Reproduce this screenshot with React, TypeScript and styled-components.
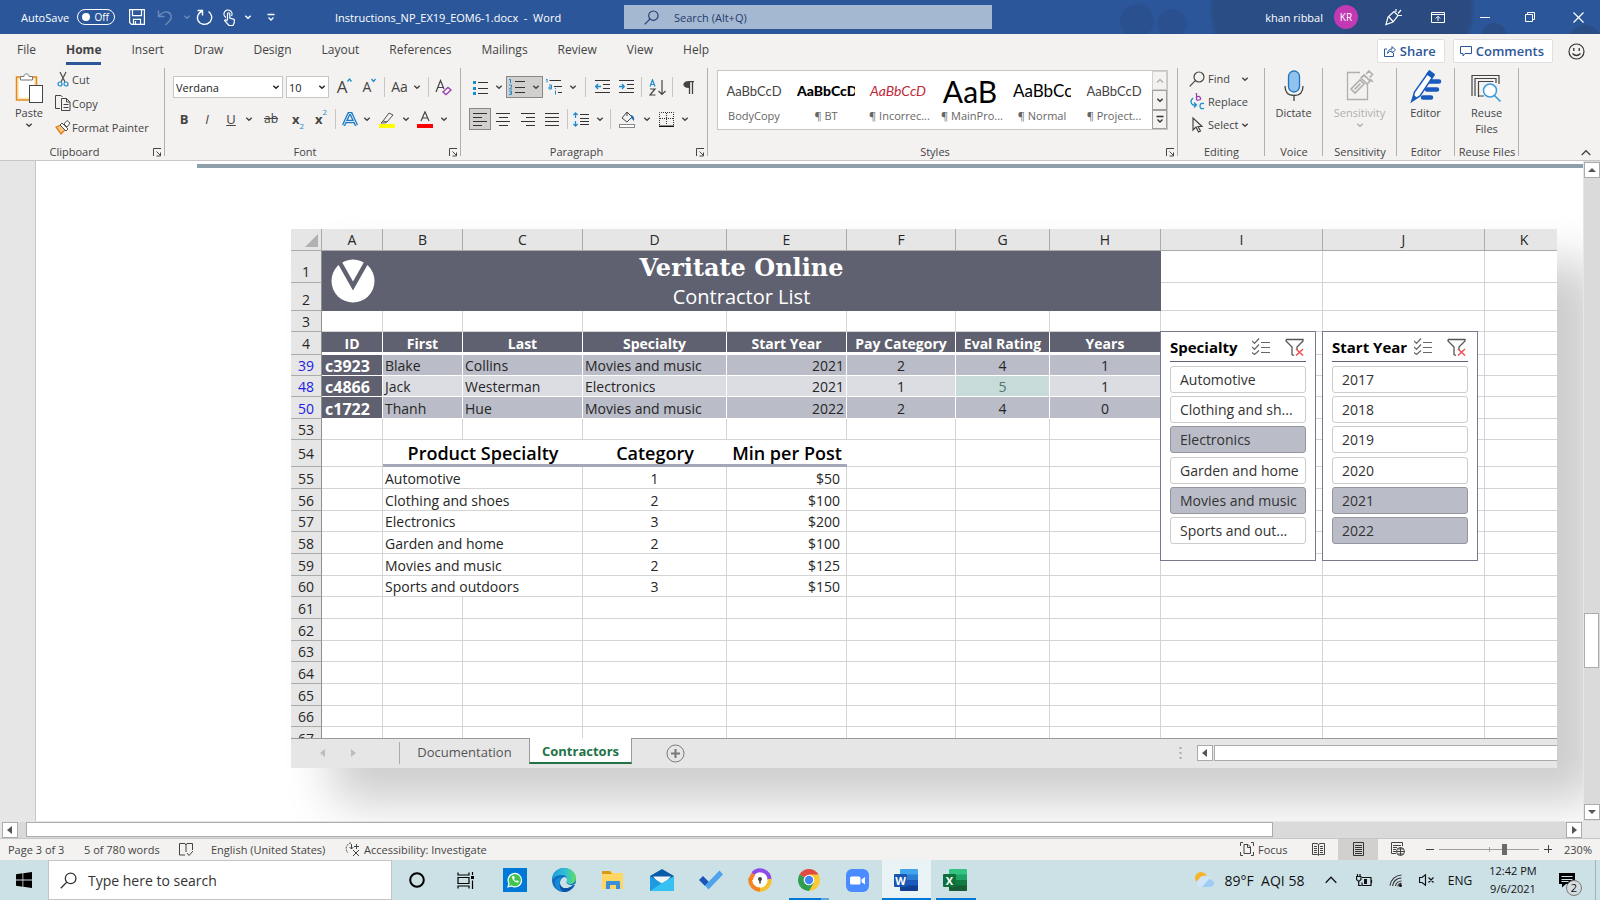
import React from 'react';
import styled, { createGlobalStyle, css } from 'styled-components';

const UI = '"Open Sans", "Noto Sans", sans-serif';
const BLUE = '#2b579a';
const INK = '#444';
const SLATE = '#5f6170';

const GlobalStyle = createGlobalStyle`
  *, *::before, *::after { box-sizing: border-box; }
  body { margin: 0; font-family: ${UI}; font-size: 11px; color: ${INK}; }
  button, input, select { font: inherit; color: inherit; margin: 0; }
  button { background: none; border: 0; padding: 0; }
`;

const Shell = styled.div`
  height: 100vh;
  display: flex;
  flex-direction: column;
  overflow: hidden;
  background: #e6e6e6;
`;

/* ---------- shared icon parts ---------- */

const Svg = styled.svg`
  display: block;
  flex: none;
  fill: none;
  stroke: currentColor;
  stroke-width: 1;
`;

type IconProps = { w: number; h: number; children: React.ReactNode };
const Icon = ({ w, h, children }: IconProps) => (
  <Svg width={w} height={h} viewBox={`0 0 ${w} ${h}`} aria-hidden="true">{children}</Svg>
);
const Chevron = ({ up = false }: { up?: boolean }) => (
  <Icon w={8} h={8}><path d={up ? 'M1 5.5 4 2.5 7 5.5' : 'M1.3 2.7 4 5.2 6.7 2.7'} strokeWidth="1.4" /></Icon>
);

/* ---------- title bar ---------- */

const TitleBar = styled.header`
  flex: none;
  height: 34px;
  display: flex;
  align-items: center;
  color: #fff;
  background:
    radial-gradient(circle at 1137px 21px, #2a5090 16px, transparent 18px),
    radial-gradient(circle at 1172px 24px, #2a5090 14px, transparent 16px),
    radial-gradient(circle at 1280px 10px, #2a4d85 66px, transparent 72px),
    radial-gradient(circle at 1400px 8px, #2a4a80 70px, transparent 76px),
    radial-gradient(circle at 1494px 36px, #2a4d85 12px, transparent 14px),
    radial-gradient(circle at 1585px 42px, #2a4d85 16px, transparent 18px),
    ${BLUE};
`;
const QuickAccess = styled.div`
  width: 335px;
  flex: none;
  padding-left: 21px;
  display: flex;
  align-items: center;
`;
const AutoSave = styled.label`
  display: flex;
  align-items: center;
  gap: 8px;
  margin-right: 12px;
`;
const Toggle = styled.span`
  position: relative;
  width: 38px;
  height: 16px;
  border: 1px solid #fff;
  border-radius: 8px;
  display: flex;
  align-items: center;
  justify-content: flex-end;
  padding-right: 5px;
  font-size: 10px;
  line-height: 14px;
`;
const ToggleInput = styled.input`
  appearance: none;
  position: absolute;
  left: 4px;
  top: 3px;
  width: 8px;
  height: 8px;
  border-radius: 50%;
  background: #fff;
`;
const TitleButton = styled.button<{ $w: number; $dim?: boolean }>`
  width: ${p => p.$w}px;
  height: 34px;
  display: flex;
  align-items: center;
  justify-content: center;
  opacity: ${p => (p.$dim ? 0.3 : 1)};
`;
const DocTitle = styled.h1`
  margin: 0;
  flex: none;
  width: 289px;
  font-size: 11px;
  font-weight: 400;
  white-space: pre;
`;
const TopSearch = styled.label`
  flex: 0 1 368px;
  height: 24px;
  display: flex;
  align-items: center;
  gap: 15px;
  padding-left: 20px;
  background: #a5b8d1;
  color: #1e3c6e;
`;
const BareInput = styled.input`
  flex: 1;
  min-width: 0;
  border: 0;
  outline: 0;
  padding: 0;
  background: transparent;
  &::placeholder { color: inherit; opacity: 1; }
`;
const Spacer = styled.div`flex: 1;`;
const UserName = styled.span`margin-right: 11px;`;
const Avatar = styled.span`
  width: 24px;
  height: 24px;
  border-radius: 50%;
  background: #c239b3;
  display: grid;
  place-items: center;
  font-size: 10px;
  margin-right: 18px;
`;

/* ---------- ribbon tabs ---------- */

const TabRow = styled.nav`
  flex: none;
  height: 34px;
  display: flex;
  align-items: center;
  padding: 0 15px 0 17px;
  background: #f3f2f1;
  font-size: 12px;
`;
const Tabs = styled.div`
  display: flex;
  gap: 30px;
`;
const Tab = styled.button<{ $active?: boolean }>`
  height: 27px;
  padding: 0;
  border-bottom: 3px solid ${p => (p.$active ? BLUE : 'transparent')};
  font-weight: ${p => (p.$active ? 700 : 400)};
`;
const CardButton = styled.button`
  height: 24px;
  display: flex;
  align-items: center;
  gap: 4px;
  padding: 0 8px 0 6px;
  margin-right: 8px;
  background: #fff;
  border: 1px solid #e1dfdd;
  border-radius: 2px;
  color: ${BLUE};
  font-size: 13px;
  font-weight: 600;
`;
const Smile = styled.button`margin-left: 7px; color: #333;`;

/* ---------- ribbon ---------- */

const Ribbon = styled.div`
  flex: none;
  height: 93px;
  display: flex;
  background: #f3f2f1;
  border-bottom: 1px solid #c8c6c4;
`;
const Group = styled.section<{ $w: number }>`
  width: ${p => p.$w}px;
  flex: none;
  background: linear-gradient(#b3b0ad, #b3b0ad) right top / 1px 88px no-repeat;
  display: flex;
  flex-direction: column;
`;
const GroupBody = styled.div<{ $pad?: number }>`
  flex: 1;
  padding-left: ${p => p.$pad ?? 0}px;
  display: flex;
`;
const GroupFoot = styled.footer<{ $launch?: boolean }>`
  height: 16px;
  display: grid;
  grid-template-columns: ${p => (p.$launch ? '1fr 16px' : '1fr')};
  align-items: center;
  justify-items: center;
  line-height: 16px;
  white-space: nowrap;
`;
const ToolLines = styled.div`
  display: flex;
  flex-direction: column;
  gap: 8px;
  padding-top: 7px;
`;
const ToolLine = styled.div`
  height: 24px;
  display: flex;
  align-items: center;
`;
const Tool = styled.button<{ $w: number; $on?: boolean; $gap?: number }>`
  width: ${p => p.$w}px;
  height: 22px;
  flex: none;
  display: flex;
  align-items: center;
  justify-content: center;
  gap: ${p => p.$gap ?? 7}px;
  ${p => p.$on && css`background: #d2d0ce; border: 1px solid #8a8886;`}
`;
const Divider = styled.span<{ $w?: number }>`
  width: ${p => p.$w ?? 8}px;
  height: 20px;
  flex: none;
  background: linear-gradient(#c8c6c4, #c8c6c4) center / 1px 100% no-repeat;
`;
const Combo = styled.label<{ $w: number }>`
  position: relative;
  width: ${p => p.$w}px;
  height: 22px;
  margin-right: 3px;
  display: flex;
  align-items: center;
  background: #fff;
  border: 1px solid #c8c6c4;
  color: #222;
  & > svg { position: absolute; right: 2px; pointer-events: none; }
`;
const Select = styled.select`
  appearance: none;
  width: 100%;
  border: 0;
  outline: 0;
  padding: 0 0 0 2px;
  background: transparent;
`;
const Glyph = styled.span<{ $bold?: boolean; $italic?: boolean; $size?: number; $line?: string }>`
  font-size: ${p => p.$size ?? 13}px;
  font-weight: ${p => (p.$bold ? 700 : 400)};
  font-style: ${p => (p.$italic ? 'italic' : 'normal')};
  text-decoration: ${p => p.$line ?? 'none'};
  line-height: 20px;
`;
const Script = styled.span<{ $low?: boolean }>`
  font-size: 8px;
  line-height: 8px;
  color: #1e8bcd;
  align-self: ${p => (p.$low ? 'flex-end' : 'flex-start')};
`;
const BigTool = styled.button<{ $w: number; $dim?: boolean }>`
  width: ${p => p.$w}px;
  padding-top: 2px;
  display: flex;
  flex-direction: column;
  align-items: center;
  justify-content: flex-start;
  line-height: 16px;
  color: ${p => (p.$dim ? '#b1afad' : INK)};
  & > svg:first-child { margin-bottom: 1px; }
`;
const Stack = styled.div<{ $row: number }>`
  display: grid;
  grid-auto-rows: ${p => p.$row}px;
  align-content: start;
`;
const TextTool = styled.button<{ $gap?: number }>`
  display: flex;
  align-items: center;
  gap: ${p => p.$gap ?? 4}px;
  padding-bottom: 2px;
  text-align: left;
  white-space: nowrap;
`;
const IconSlot = styled.span<{ $w: number }>`
  width: ${p => p.$w}px;
  display: flex;
  justify-content: center;
`;

const Gallery = styled.div`
  flex: 1;
  height: 60px;
  margin: 2px 10px 0 9px;
  display: flex;
  background: #fff;
  border: 1px solid #c8c6c4;
`;
const StyleItem = styled.button`
  width: 72px;
  height: 58px;
  padding: 0 7px 4px;
  flex: none;
  overflow: hidden;
  color: #666;
`;
const Sample = styled.span<{ $size: number; $color: string; $bold?: boolean; $italic?: boolean }>`
  display: block;
  height: 36px;
  overflow: hidden;
  font-family: Lato, sans-serif;
  font-size: ${p => p.$size}px;
  line-height: 38px;
  color: ${p => p.$color};
  font-weight: ${p => (p.$bold ? 900 : 400)};
  font-style: ${p => (p.$italic ? 'italic' : 'normal')};
  white-space: nowrap;
`;
const StyleName = styled.span`
  display: block;
  line-height: 16px;
  white-space: nowrap;
`;
const GalleryNav = styled.div`
  width: 15px;
  margin-left: auto;
  display: grid;
  grid-template-rows: repeat(3, 1fr);
`;
const NavButton = styled.button<{ $dim?: boolean }>`
  display: grid;
  place-content: center;
  background: #f3f2f1;
  border: 1px solid ${p => (p.$dim ? '#d2d0ce' : '#a19f9d')};
  color: ${p => (p.$dim ? '#b1afad' : '#333')};
`;
const RibbonEnd = styled.div`
  flex: 1;
  display: flex;
  justify-content: flex-end;
  align-items: flex-end;
  padding: 0 9px 3px 0;
`;

/* ---------- document ---------- */

const Workspace = styled.main`
  flex: 1;
  min-height: 0;
  display: flex;
  overflow: hidden;
`;
const Page = styled.article`
  flex: 1;
  min-width: 0;
  margin-left: 35px;
  background: #fff;
  border-left: 1px solid #c6c6c6;
  overflow: hidden;
`;
const PageRule = styled.div`
  height: 4px;
  margin: 3px 0 0 161px;
  background: #8e9fac;
`;
const Sheet = styled.section`
  position: relative;
  margin: 61px 26px 0 255px;
  background: #fff;
  box-shadow: 42px 34px 46px rgba(0, 0, 0, 0.2);
  font-size: 14px;
  color: #262626;
`;
const GridClip = styled.div`overflow: hidden; height: 509px;`;
const Grid = styled.table`
  width: 100%;
  table-layout: fixed;
  border-collapse: separate;
  border-spacing: 0;
  line-height: 16px;
`;
const Col = styled.col<{ $w?: number }>`width: ${p => (p.$w ? `${p.$w}px` : 'auto')};`;
const Row = styled.tr<{ $h: number }>`height: ${p => p.$h}px;`;
const ColHead = styled.th`
  padding: 0;
  font-weight: 400;
  background: #e6e6e6;
  border-right: 1px solid #ababab;
  border-bottom: 1px solid #ababab;
  &:last-child { border-right: 0; padding-left: 6px; }
`;
const RowHead = styled.th<{ $filtered?: boolean; $low?: boolean }>`
  padding: ${p => (p.$low ? '0 0 2px' : '2px 0 0')};
  font-weight: 400;
  color: ${p => (p.$filtered ? '#2020e8' : '#262626')};
  background: #e6e6e6;
  border-right: 1px solid #8f8f8f;
  border-bottom: 1px solid #ababab;
  vertical-align: ${p => (p.$low ? 'bottom' : 'middle')};
`;
const Cell = styled.td<{ $align?: string; $pad?: number }>`
  padding: 2px ${p => p.$pad ?? 2}px 0;
  text-align: ${p => p.$align ?? 'left'};
  white-space: nowrap;
  border-right: 1px solid #d4d4d4;
  border-bottom: 1px solid #d4d4d4;
  &:last-child { border-right: 0; }
`;
const BannerCell = styled.td`
  padding: 0;
  background: ${SLATE};
  color: #fff;
`;
const Banner = styled.div`
  display: grid;
  grid-template-columns: 62px 1fr 62px;
  align-items: center;
  justify-items: center;
`;
const BannerText = styled.div`text-align: center;`;
const BannerTitle = styled.div`
  font: 700 24px/32px "DejaVu Serif", serif;
`;
const BannerSub = styled.div`
  font-size: 20px;
  font-weight: 500;
  line-height: 26px;
`;
const HeadCell = styled.th`
  padding: 3px 0 0;
  background: ${SLATE};
  color: #fff;
  font-weight: 700;
  white-space: nowrap;
  border-right: 1px solid #fff;
  border-bottom: 3px solid #fff;
`;
const DataCell = styled.td<{ $alt?: boolean; $align?: string; $good?: boolean }>`
  padding: 2px 2px 0;
  text-align: ${p => p.$align ?? 'left'};
  white-space: nowrap;
  border-right: 1px solid #fff;
  border-bottom: 1px solid #fff;
  background: ${p => (p.$good ? '#c7dbd8' : p.$alt ? '#dcdde3' : '#babdc8')};
  color: ${p => (p.$good ? '#4d7773' : '#262626')};
`;
const IdCell = styled.th`
  padding: 2px 0 0 3px;
  text-align: left;
  font-size: 16px;
  background: ${SLATE};
  color: #fff;
  border-right: 1px solid #fff;
  border-bottom: 1px solid #fff;
`;
const SubHead = styled.th`
  padding: 2px 0 0;
  font-size: 18px;
  font-weight: 600;
  line-height: 20px;
  color: #000;
  white-space: nowrap;
  border-bottom: 3px solid #a4a7b5;
`;

const SheetTabs = styled.div`
  height: 30px;
  display: flex;
  align-items: flex-start;
  background: #e6e6e6;
  border-top: 1px solid #9a9a9a;
  font-size: 13px;
`;
const SheetNav = styled.div`
  width: 109px;
  height: 22px;
  margin-top: 3px;
  padding-left: 28px;
  display: flex;
  align-items: center;
  gap: 22px;
  border-right: 1px solid #ababab;
  color: #bdbdbd;
`;
const SheetTab = styled.button<{ $active?: boolean; $w: number }>`
  width: ${p => p.$w}px;
  height: 26px;
  margin-top: -1px;
  padding-top: 2px;
  color: #555;
  ${p => p.$active && css`
    background: #fff;
    color: #217346;
    font-weight: 700;
    border: solid #9a9a9a;
    border-width: 0 1px;
    border-bottom: 2px solid #217346;
  `}
`;
const AddSheet = styled.button`margin: 5px 0 0 34px; color: #777;`;
const SheetScroll = styled.div`
  width: 378px;
  margin-top: 6px;
  display: flex;
  align-items: center;
  color: #777;
`;
const SheetTrack = styled.div`
  flex: 1;
  height: 16px;
  margin-left: 1px;
  background: #fff;
  border: solid #ababab;
  border-width: 1px 0 1px 1px;
`;
const ArrowButton = styled.button`
  width: 16px;
  height: 16px;
  flex: none;
  display: grid;
  place-content: center;
  background: #fff;
  border: 1px solid #ababab;
  color: #555;
`;
const DotsSlot = styled.span`margin-right: 15px;`;

/* slicers float over the grid */
const Slicers = styled.div`
  position: absolute;
  left: 869px;
  top: 102px;
  display: flex;
  gap: 6px;
`;
const Slicer = styled.section`
  width: 156px;
  height: 230px;
  padding: 0 9px 16px;
  background: #fff;
  border: 1px solid #77798c;
  display: flex;
  flex-direction: column;
`;
const SlicerHead = styled.header`
  height: 30px;
  margin-bottom: 4px;
  border-bottom: 1px solid ${SLATE};
  display: flex;
  align-items: center;
  font-weight: 700;
  font-size: 15px;
  color: #000;
  white-space: nowrap;
`;
const SlicerIcons = styled.span`
  margin-left: auto;
  padding-right: 2px;
  display: flex;
  gap: 15px;
`;
const SlicerList = styled.div`
  flex: 1;
  display: flex;
  flex-direction: column;
  justify-content: space-between;
`;
const SlicerButton = styled.button<{ $on?: boolean }>`
  height: 27px;
  padding: 0 0 0 9px;
  text-align: left;
  white-space: nowrap;
  color: #333;
  background: ${p => (p.$on ? '#babdc8' : '#fff')};
  border: 1px solid ${p => (p.$on ? '#94969f' : '#ccc')};
  border-radius: 3px;
`;

/* ---------- scroll bars ---------- */

const VScroll = styled.div`
  width: 17px;
  flex: none;
  display: flex;
  flex-direction: column;
  align-items: center;
  padding: 1px 1px 1px 0;
  background: #dadada;
  border-left: 1px solid #e6e6e6;
`;
const VThumb = styled.div`
  width: 15px;
  height: 55px;
  background: #fff;
  border: 1px solid #ababab;
`;
const Grow = styled.div<{ $by: number }>`flex: ${p => p.$by};`;
const HScroll = styled.div`
  flex: none;
  height: 17px;
  display: flex;
  align-items: center;
  padding: 0 18px 0 2px;
  background: #e6e6e6;
`;
const HTrack = styled.div`
  flex: 1;
  height: 16px;
  padding-left: 8px;
  background: #dadada;
`;
const HThumb = styled.div`
  width: 81%;
  height: 15px;
  background: #fff;
  border: 1px solid #ababab;
`;

/* ---------- status bar ---------- */

const StatusBar = styled.footer`
  flex: none;
  height: 22px;
  padding: 0 0 1px 8px;
  display: flex;
  align-items: center;
  background: #f3f2f1;
  border-top: 1px solid #c8c6c4;
`;
const StatusItem = styled.span<{ $w: number }>`
  width: ${p => p.$w}px;
  display: flex;
  align-items: center;
  gap: 4px;
  white-space: nowrap;
`;
const ViewButton = styled.button<{ $on?: boolean }>`
  width: 40px;
  height: 21px;
  display: grid;
  place-content: center;
  background: ${p => (p.$on ? '#d2d0ce' : 'transparent')};
`;
const ZoomGroup = styled.div`
  display: flex;
  align-items: center;
  margin-left: 4px;
`;
const ZoomButton = styled.button`
  width: 16px;
  display: grid;
  place-content: center;
`;
const ZoomRange = styled.input`
  appearance: none;
  width: 100px;
  height: 14px;
  margin: 0 1px;
  background: linear-gradient(#a19f9d, #a19f9d) center / 100% 1px no-repeat,
    linear-gradient(#a19f9d, #a19f9d) center / 1px 5px no-repeat;
  &::-webkit-slider-thumb {
    appearance: none;
    width: 5px;
    height: 11px;
    background: #6a6a6a;
  }
`;
const ZoomValue = styled.span`
  width: 44px;
  padding-right: 8px;
  text-align: right;
`;

/* ---------- task bar ---------- */

const TaskBar = styled.footer`
  flex: none;
  height: 40px;
  display: flex;
  align-items: stretch;
  background: #cce1e6;
  color: #111;
`;
const StartButton = styled.button`
  width: 48px;
  display: grid;
  place-content: center;
`;
const TaskSearch = styled.label`
  width: 344px;
  display: flex;
  align-items: center;
  gap: 11px;
  padding: 0 10px 0 11px;
  background: #fff;
  border: 1px solid #c4c4c4;
  font-size: 14px;
  color: #333;
`;
const TaskButton = styled.button<{ $state?: 'open' | 'active' | 'stack' }>`
  width: 49px;
  display: grid;
  place-content: center;
  ${p => p.$state === 'active' && css`
    background: linear-gradient(#0078d7, #0078d7) bottom / 100% 2px no-repeat, #e9f2f4;
  `}
  ${p => p.$state === 'open' && css`
    background: linear-gradient(#0078d7, #0078d7) bottom / 40px 2px no-repeat;
  `}
  ${p => p.$state === 'stack' && css`
    background: linear-gradient(90deg, #0078d7 80%, #62a8e0 80%) bottom / 40px 2px no-repeat;
  `}
`;
const TrayItem = styled.button<{ $w: number }>`
  width: ${p => p.$w}px;
  display: flex;
  align-items: center;
  justify-content: center;
  gap: 9px;
  white-space: pre;
`;
const Weather = styled(TrayItem)`
  font-size: 14px;
  padding-right: 6px;
`;
const Language = styled(TrayItem)`font-size: 12px;`;
const Clock = styled.time`
  width: 62px;
  padding-top: 2px;
  text-align: center;
  line-height: 18px;
`;
const Notice = styled.button`
  position: relative;
  width: 52px;
  padding-left: 15px;
  display: flex;
  align-items: center;
  border-right: 1px solid #9db4ba;
  margin-right: 4px;
`;
const Badge = styled.span`
  position: absolute;
  left: 22px;
  top: 20px;
  width: 16px;
  height: 16px;
  display: grid;
  place-items: center;
  border: 1px solid #777;
  border-radius: 50%;
  background: #d4dcde;
  font-size: 11px;
  line-height: 14px;
`;

/* ---------- icon drawings ---------- */

const Search = ({ s = 15 }: { s?: number }) => (
  <Svg width={s} height={s} viewBox="0 0 16 16" aria-hidden="true">
    <circle cx="10" cy="6" r="5" strokeWidth="1.2" /><path d="M6.3 9.7 .7 15.3" strokeWidth="1.2" />
  </Svg>
);
const Launcher = () => (
  <Icon w={9} h={9}><path d="M.5 8V.5H8M3.5 3.5l4 4M7.5 4.5v3.5h-4" /></Icon>
);
const Lines = ({ rows }: { rows: [number, number][] }) => (
  <Icon w={15} h={15}>
    {rows.map(([a, b], i) => <path key={i} d={`M${a} ${1.5 + i * 4}H${b}`} stroke="#333" />)}
  </Icon>
);
const ArrowGlyph = ({ dir }: { dir: 'l' | 'r' | 'u' | 'd' }) => {
  const d = { l: 'M6 0v8L1 4z', r: 'M2 0v8l5-4z', u: 'M0 6h8L4 2z', d: 'M0 2h8L4 6z' }[dir];
  return <Icon w={8} h={8}><path d={d} fill="currentColor" stroke="none" /></Icon>;
};
const Undo = () => (
  <Icon w={16} h={17}><path d="M1.5 1.500v6h6M1.8 7.2C5 3.5 8 2.5 10.5 3c4 1 5 6 2 9L8.5 16" strokeWidth="1.4" /></Icon>
);
const MoreBar = () => (
  <Icon w={8} h={9}><path d="M.5 1.5h7M1.5 4.5 4 7l2.5-2.5" strokeWidth="1.3" /></Icon>
);
const Checks = () => (
  <Icon w={18} h={17}>
    <path d="M0 3l2.5 2.5L7 .5M0 9l2.5 2.5L7 6.5M0 14.5l2.5 2L7 12.5M9 4.5h9M9 9.5h9M9 14.5h9" stroke="#666" strokeWidth="1.2" />
  </Icon>
);
const ClearFilter = () => (
  <Icon w={19} h={18}>
    <path d="M1 1.5h17v1.5l-6 6V12M1 1.5V3l6 6v7.5l2 1" stroke="#555" strokeWidth="1.3" />
    <path d="M11 11l7 6.5M18 11l-7 6.5" stroke="#e8535b" strokeWidth="1.5" />
  </Icon>
);
const OfficeTile = ({ letter, c }: { letter: 'W' | 'X'; c: string[] }) => (
  <Icon w={25} h={22}>
    <g stroke="none">
      <rect x="6" y="0" width="18" height="22" rx="1" fill={c[0]} />
      <rect x="6" y="5.5" width="18" height="6" fill={c[1]} />
      <rect x="6" y="11" width="18" height="6" fill={c[2]} />
      <path d="M6 16.5h18V21q0 1-1 1H7q-1 0-1-1z" fill={c[3]} />
      <rect x="0" y="5" width="13" height="13" rx="1" fill={c[4]} />
      <text x="6.5" y="15.5" fill="#fff" fontSize="11" fontWeight="700" textAnchor="middle" fontFamily="Open Sans">{letter}</text>
    </g>
  </Icon>
);

/* ---------- data ---------- */

const TABS = ['File', 'Home', 'Insert', 'Draw', 'Design', 'Layout', 'References', 'Mailings', 'Review', 'View', 'Help'];

const STYLES = [
  { s: 'AaBbCcD', n: 'BodyCopy', size: 13, color: '#444' },
  { s: 'AaBbCcD', n: '¶ BT', size: 14, color: '#000', bold: true },
  { s: 'AaBbCcD', n: '¶ Incorrec...', size: 14, color: '#c0273d', italic: true },
  { s: 'AaB', n: '¶ MainPro...', size: 30, color: '#000' },
  { s: 'AaBbCc', n: '¶ Normal', size: 17, color: '#000' },
  { s: 'AaBbCcD', n: '¶ Project...', size: 13, color: '#444' },
];

const COLS: [string, number?][] = [
  ['A', 61], ['B', 80], ['C', 120], ['D', 144], ['E', 120], ['F', 109], ['G', 94], ['H', 111], ['I', 162], ['J', 162], ['K'],
];
const HEADS = ['ID', 'First', 'Last', 'Specialty', 'Start Year', 'Pay Category', 'Eval Rating', 'Years'];
const PEOPLE = [
  { row: 39, h: 21, v: ['c3923', 'Blake', 'Collins', 'Movies and music', '2021', '2', '4', '1'] },
  { row: 48, h: 21, v: ['c4866', 'Jack', 'Westerman', 'Electronics', '2021', '1', '5', '1'] },
  { row: 50, h: 22, v: ['c1722', 'Thanh', 'Hue', 'Movies and music', '2022', '2', '4', '0'] },
];
const PRICES = [
  ['Automotive', '1', '$50'], ['Clothing and shoes', '2', '$100'], ['Electronics', '3', '$200'],
  ['Garden and home', '2', '$100'], ['Movies and music', '2', '$125'], ['Sports and outdoors', '3', '$150'],
];
const SLICERS = [
  { title: 'Specialty', items: ['Automotive', 'Clothing and sh...', 'Electronics', 'Garden and home', 'Movies and music', 'Sports and out...'], on: [2, 4] },
  { title: 'Start Year', items: ['2017', '2018', '2019', '2020', '2021', '2022'], on: [4, 5] },
];
/* body rows repeat a 22 / 22 / 21 rhythm */
const rowHeight = (i: number) => (i % 3 === 2 ? 21 : 22);
const blanks = (n: number) => Array.from({ length: n }, (_, i) => <Cell key={i} />);

const Foot = ({ label, launch }: { label: string; launch?: boolean }) => (
  <GroupFoot $launch={launch}><span>{label}</span>{launch && <button aria-label={`${label} settings`}><Launcher /></button>}</GroupFoot>
);
const Drop = ({ w }: { w: number }) => <Tool $w={w} aria-label="More"><Chevron /></Tool>;

function RibbonBar() {
  return (
    <Ribbon>
      <Group $w={165}>
        <GroupBody $pad={2}>
          <BigTool $w={54}>
            <Icon w={28} h={34}>
              <rect x="1.5" y="7" width="20" height="23" fill="#fde7b8" stroke="#e08a1e" strokeWidth="1.5" />
              <rect x="4" y="9.5" width="15" height="18" fill="#fff" stroke="none" />
              <path d="M5.5 10V6.5h3.5C9 3 14 3 14 6.5h3.5V10z" fill="#fff" stroke="#777" />
              <rect x="14.5" y="15.5" width="13" height="17" fill="#fff" stroke="#444" />
            </Icon>
            Paste
            <Chevron />
          </BigTool>
          <Stack $row={24}>
            <TextTool $gap={3}>
              <IconSlot $w={13}>
                <Icon w={12} h={16}>
                  <path d="M3 1l5 10M9 1L4 11" stroke="#555" strokeWidth="1.3" />
                  <circle cx="3" cy="13" r="2" stroke="#1e8bcd" strokeWidth="1.2" /><circle cx="9" cy="13" r="2" stroke="#1e8bcd" strokeWidth="1.2" />
                </Icon>
              </IconSlot>
              Cut
            </TextTool>
            <TextTool $gap={3}>
              <IconSlot $w={13}>
                <Icon w={16} h={16}>
                  <path d="M5 13.5H.5V.5H6l1.5 1.5M6.500 3.5h5l3.5 3.5v8.5h-8.5zM11.5 3.5V7H15M8.5 9.5h5M8.5 12.5h5" stroke="#444" />
                </Icon>
              </IconSlot>
              Copy
            </TextTool>
            <TextTool $gap={3}>
              <IconSlot $w={13}>
                <Icon w={16} h={15}>
                  <path d="M1 7l5-2 4 5-4 4z" fill="#f7c67c" stroke="#e07b1e" strokeWidth="1.3" />
                  <path d="M5 5l2-2 6 6-2 2zM9 4l3-3.5 3 2.5-3 4z" fill="#fff" stroke="#555" />
                </Icon>
              </IconSlot>
              Format Painter
            </TextTool>
          </Stack>
        </GroupBody>
        <Foot label="Clipboard" launch />
      </Group>

      <Group $w={296}>
        <GroupBody $pad={8}>
          <ToolLines>
            <ToolLine>
              <Combo $w={110}><Select aria-label="Font"><option>Verdana</option></Select><Chevron /></Combo>
              <Combo $w={43}><Select aria-label="Font size"><option>10</option></Select><Chevron /></Combo>
              <Tool $w={25} $gap={0} aria-label="Grow font"><Glyph $size={17}>A</Glyph><Script><Icon w={5} h={8}><path d="M.5 5.5 2.5 3 4.5 5.5" strokeWidth="1.3" /></Icon></Script></Tool>
              <Tool $w={25} $gap={0} aria-label="Shrink font"><Glyph $size={14}>A</Glyph><Script><Icon w={5} h={8}><path d="M.5 3 2.5 5.500 4.5 3" strokeWidth="1.3" /></Icon></Script></Tool>
              <Divider $w={4} />
              <Tool $w={40} $gap={5} aria-label="Change case"><Glyph $size={14}>Aa</Glyph><Chevron /></Tool>
              <Divider $w={4} />
              <Tool $w={26} aria-label="Clear formatting">
                <Icon w={17} h={17}>
                  <path d="M1 13L5.5 1.5 9 10M3 8.5h5" stroke="#444" strokeWidth="1.2" />
                  <path d="M8 13l5-4.5 3 2.5-5 4.5z" fill="#fff" stroke="#9b3fb0" strokeWidth="1.4" />
                </Icon>
              </Tool>
            </ToolLine>
            <ToolLine>
              <Tool $w={22}><Glyph $bold>B</Glyph></Tool>
              <Tool $w={24}><Glyph $italic>I</Glyph></Tool>
              <Tool $w={24}><Glyph $line="underline">U</Glyph></Tool>
              <Drop w={12} />
              <Tool $w={32}><Glyph $size={12} $line="line-through">ab</Glyph></Tool>
              <Tool $w={22} $gap={0}><Glyph $bold>x</Glyph><Script $low>2</Script></Tool>
              <Tool $w={24} $gap={0}><Glyph $bold>x</Glyph><Script>2</Script></Tool>
              <Divider $w={4} />
              <Tool $w={25} aria-label="Text effects">
                <Icon w={16} h={15}><path d="M1.5 13.5L7 1.5h2l5.5 12M4 9.5h8" stroke="#1e7ac2" strokeWidth="3.4" /><path d="M1.5 13.5L7 1.5h2l5.5 12M4 9.5h8" stroke="#cfe6f7" /></Icon>
              </Tool>
              <Drop w={10} />
              <Tool $w={30} aria-label="Highlight">
                <Icon w={16} h={17}><path d="M4 10l6-8 4 2-6 7zM4 10l-2 2h4l2-1" stroke="#555" /><rect y="13" width="16" height="4" fill="#ff0" stroke="none" /></Icon>
              </Tool>
              <Drop w={8} />
              <Tool $w={30} aria-label="Font colour">
                <Icon w={16} h={17}><path d="M4 10L8 .8 12 10M5.5 7h5" stroke="#444" strokeWidth="1.2" /><rect y="13" width="16" height="4" fill="#f00" stroke="none" /></Icon>
              </Tool>
              <Drop w={8} />
            </ToolLine>
          </ToolLines>
        </GroupBody>
        <Foot label="Font" launch />
      </Group>

      <Group $w={247}>
        <GroupBody $pad={8}>
          <ToolLines>
            <ToolLine>
              <Tool $w={37} aria-label="Bullets">
                <Icon w={15} h={15}><path d="M5 2.5h10M5 8.5h10M5 13.5h10" stroke="#333" /><path d="M0 1h3v3H0zM0 7h3v3H0zM0 12h3v3H0z" fill="#1e8bcd" stroke="none" /></Icon>
                <Chevron />
              </Tool>
              <Tool $w={37} $on aria-label="Numbering">
                <Icon w={16} h={16}><path d="M6 2.5h10M6 8.5h10M6 13.5h10" stroke="#333" /><path d="M0 1l1.500-1v4M.2 6h2.3v2L.5 10h2.5M0 12h2.5v3.5H0M1 13.7h1.5" stroke="#1e8bcd" /></Icon>
                <Chevron />
              </Tool>
              <Tool $w={37} aria-label="Multilevel list">
                <Icon w={16} h={16}><path d="M3.5 1.5H15M8 7.5h8M12 13.5h4" stroke="#333" /><path d="M0 1l1-1v3.5M3 6h2.5v4H3V8h2.5M9.5 11.5v4M9.5 9v1" stroke="#1e8bcd" /></Icon>
                <Chevron />
              </Tool>
              <Divider $w={10} />
              <Tool $w={24} aria-label="Decrease indent">
                <Icon w={15} h={14}><path d="M0 .5h15M8 4.5h7M8 8.5h7M0 12.5h15" stroke="#333" /><path d="M6 6.5H.8M3 4L.8 6.5 3 9" stroke="#1e8bcd" strokeWidth="1.4" /></Icon>
              </Tool>
              <Tool $w={24} aria-label="Increase indent">
                <Icon w={15} h={14}><path d="M0 .5h15M8 4.5h7M8 8.5h7M0 12.5h15" stroke="#333" /><path d="M0 6.5h5.2M3 4l2.2 2.5L3 9" stroke="#1e8bcd" strokeWidth="1.4" /></Icon>
              </Tool>
              <Divider $w={6} />
              <Tool $w={26} aria-label="Sort">
                <Icon w={17} h={17}><path d="M1 7.5L3.5 .8 6 7.5M2 5.5h3.5" stroke="#1e8bcd" strokeWidth="1.2" /><path d="M1 10h5l-5 6h5.5M13 1v14.5M9.5 12l3.5 3.5 3.5-3.5" stroke="#444" strokeWidth="1.2" /></Icon>
              </Tool>
              <Divider $w={5} />
              <Tool $w={26} aria-label="Show marks">
                <Icon w={11} h={13}><path d="M6 .5h5M6.5 .5V13M9.5 .5V13" strokeWidth="1.3" /><path d="M6 0v7C-1.500 7-1.500 0 6 0z" fill="#444" stroke="none" /></Icon>
              </Tool>
            </ToolLine>
            <ToolLine>
              <Tool $w={22} $on aria-label="Align left"><Lines rows={[[0, 14], [0, 9], [0, 14], [0, 9]]} /></Tool>
              <Tool $w={25} aria-label="Center"><Lines rows={[[0, 14], [3, 12], [0, 14], [3, 12]]} /></Tool>
              <Tool $w={24} aria-label="Align right"><Lines rows={[[0, 14], [5, 14], [0, 14], [5, 14]]} /></Tool>
              <Tool $w={24} aria-label="Justify"><Lines rows={[[0, 14], [0, 14], [0, 14], [0, 14]]} /></Tool>
              <Divider $w={6} />
              <Tool $w={36} aria-label="Line spacing">
                <Icon w={16} h={15}><path d="M7 2.5h9M7 6.5h9M7 9.5h9M7 12.5h9" stroke="#333" /><path d="M2.5 1v5M2.5 9v5M.3 3L2.5 1l2.2 2M.3 12l2.2 2 2.2-2" stroke="#1e8bcd" strokeWidth="1.3" /></Icon>
                <Chevron />
              </Tool>
              <Divider $w={8} />
              <Tool $w={42} aria-label="Shading">
                <Icon w={17} h={17}><path d="M3 7l5-6 5 5-5 5zM8 1v4" stroke="#444" /><path d="M12 4q4 1 3 6l-3-3z" fill="#1e6fb8" stroke="none" /><rect x=".5" y="13.5" width="15" height="3" fill="#fff" stroke="#888" /></Icon>
                <Chevron />
              </Tool>
              <Tool $w={36} aria-label="Borders">
                <Icon w={15} h={15}><path d="M.5 13V.5h14V13M7.5 1v12M1 6.5h13" stroke="#333" strokeDasharray="1 1" /><path d="M0 14.3h15" stroke="#111" strokeWidth="1.5" /></Icon>
                <Chevron />
              </Tool>
            </ToolLine>
          </ToolLines>
        </GroupBody>
        <Foot label="Paragraph" launch />
      </Group>

      <Group $w={470}>
        <GroupBody>
          <Gallery>
            {STYLES.map(s => (
              <StyleItem key={s.n}>
                <Sample $size={s.size} $color={s.color} $bold={s.bold} $italic={s.italic}>{s.s}</Sample>
                <StyleName>{s.n}</StyleName>
              </StyleItem>
            ))}
            <GalleryNav>
              <NavButton $dim aria-label="Up"><Chevron up /></NavButton>
              <NavButton aria-label="Down"><Chevron /></NavButton>
              <NavButton aria-label="All styles"><MoreBar /></NavButton>
            </GalleryNav>
          </Gallery>
        </GroupBody>
        <Foot label="Styles" launch />
      </Group>

      <Group $w={87}>
        <GroupBody $pad={11}>
          <Stack $row={23}>
            <TextTool $gap={3}><IconSlot $w={16}><Search s={16} /></IconSlot>Find<IconSlot $w={24}><Chevron /></IconSlot></TextTool>
            <TextTool $gap={3}>
              <IconSlot $w={16}>
                <Icon w={15} h={17}>
                  <path d="M6.5 0v7M6.5 4q3-1.500 4 1t-4 2" stroke="#9b3fb0" strokeWidth="1.3" />
                  <path d="M14 10.5q-4-1-4 2.5t4 2.5M3 5q-4 4 0 7h3M4 9.5l2.5 2.5L4 14.5" stroke="#1e8bcd" strokeWidth="1.3" />
                </Icon>
              </IconSlot>
              Replace
            </TextTool>
            <TextTool $gap={3}><IconSlot $w={16}><Icon w={11} h={16}><path d="M1 1v12l3-3 2.5 5 2-1L6 9.5h4z" stroke="#444" strokeWidth="1.2" /></Icon></IconSlot>Select<Chevron /></TextTool>
          </Stack>
        </GroupBody>
        <Foot label="Editing" />
      </Group>

      <Group $w={58}>
        <GroupBody>
          <BigTool $w={57}>
            <Icon w={20} h={34}>
              <rect x="4.5" y="1" width="11" height="21" rx="5.5" fill="#8fc3ee" stroke="#2372b9" strokeWidth="1.3" />
              <path d="M1 16q0 9.5 9 9.5t9-9.5M10 25.5V31" stroke="#444" strokeWidth="1.3" />
            </Icon>
            Dictate
          </BigTool>
        </GroupBody>
        <Foot label="Voice" />
      </Group>
      <Group $w={74}>
        <GroupBody>
          <BigTool $w={73} $dim>
            <Icon w={28} h={34}>
              <path d="M14 2.5H1.5v27h20V14" strokeWidth="1.3" />
              <path d="M5 19l9-9 4 4-9 9zM8.5 19.5l6-6M15 8l6 6 3-3-6-6zM20 4l3-3 3.5 3.5-3 3M24 9l3 3" strokeWidth="1.6" />
            </Icon>
            Sensitivity
            <Chevron />
          </BigTool>
        </GroupBody>
        <Foot label="Sensitivity" />
      </Group>
      <Group $w={58}>
        <GroupBody>
          <BigTool $w={57}>
            <Icon w={32} h={34}>
              <g stroke="#185abd">
                <path d="M19 11.5h10M17 19.500h10M13 27.5h8" strokeWidth="4.5" strokeLinecap="round" />
                <path d="M2 31l2.5-9L19 1.500l5 3.5L10 26z" fill="#fff" strokeWidth="1.5" />
                <path d="M17 4l5 3.5 2-3L19.500 1zM2 31l2-5 2 2z" fill="#185abd" strokeWidth="1.5" />
              </g>
            </Icon>
            Editor
          </BigTool>
        </GroupBody>
        <Foot label="Editor" />
      </Group>
      <Group $w={64}>
        <GroupBody>
          <BigTool $w={63}>
            <Icon w={31} h={34}>
              <path d="M1 26V5.5h27V14M4 26V8.5h21V13M7.5 27V11.5h15M7 26h6" stroke="#444" strokeWidth="1.2" />
              <circle cx="19" cy="20.5" r="6.5" fill="#fff" stroke="#3a9bdc" strokeWidth="1.5" /><path d="M23.5 25.5l6 6" stroke="#3a9bdc" strokeWidth="1.6" />
            </Icon>
            <span>Reuse<br />Files</span>
          </BigTool>
        </GroupBody>
        <Foot label="Reuse Files" />
      </Group>
      <RibbonEnd><button aria-label="Collapse ribbon"><Icon w={10} h={8}><path d="M.7 6 5 1.7 9.3 6" strokeWidth="1.3" /></Icon></button></RibbonEnd>
    </Ribbon>
  );
}

function Spreadsheet() {
  return (
    <Sheet>
      <GridClip>
        <Grid>
          <colgroup><Col $w={31} />{COLS.map(([c, w]) => <Col key={c} $w={w} />)}</colgroup>
          <tbody>
            <Row $h={22}>
              <ColHead><Icon w={30} h={20}><path d="M27 4v13H14z" fill="#b1b1b1" stroke="none" /></Icon></ColHead>
              {COLS.map(([c]) => <ColHead key={c}>{c}</ColHead>)}
            </Row>
            <Row $h={32}>
              <RowHead $low>1</RowHead>
              <BannerCell colSpan={8} rowSpan={2}>
                <Banner>
                  <Icon w={44} h={44}>
                    <circle cx="22" cy="22" r="21.5" fill="#fff" stroke="none" />
                    <path d="M9 4l13 23L35 4" stroke={SLATE} strokeWidth="4.5" />
                  </Icon>
                  <BannerText><BannerTitle>Veritate Online</BannerTitle><BannerSub>Contractor List</BannerSub></BannerText>
                </Banner>
              </BannerCell>
              {blanks(3)}
            </Row>
            <Row $h={28}><RowHead $low>2</RowHead>{blanks(3)}</Row>
            <Row $h={21}><RowHead>3</RowHead>{blanks(11)}</Row>
            <Row $h={23}><RowHead>4</RowHead>{HEADS.map(h => <HeadCell key={h}>{h}</HeadCell>)}{blanks(3)}</Row>
            {PEOPLE.map((p, r) => (
              <Row key={p.row} $h={p.h}>
                <RowHead $filtered>{p.row}</RowHead>
                <IdCell>{p.v[0]}</IdCell>
                {p.v.slice(1).map((v, i) => (
                  <DataCell key={i} $alt={r === 1} $good={v === '5'} $align={i === 3 ? 'right' : i > 3 ? 'center' : 'left'}>{v}</DataCell>
                ))}
                {blanks(3)}
              </Row>
            ))}
            <Row $h={21}><RowHead>53</RowHead>{blanks(11)}</Row>
            <Row $h={27}>
              <RowHead>54</RowHead><Cell />
              <SubHead colSpan={2}>Product Specialty</SubHead><SubHead>Category</SubHead><SubHead>Min per Post</SubHead>
              {blanks(6)}
            </Row>
            {PRICES.map(([name, cat, price], i) => (
              <Row key={name} $h={rowHeight(i)}>
                <RowHead>{55 + i}</RowHead><Cell />
                <Cell colSpan={2}>{name}</Cell><Cell $align="center">{cat}</Cell><Cell $align="right" $pad={6}>{price}</Cell>
                {blanks(6)}
              </Row>
            ))}
            {[61, 62, 63, 64, 65, 66, 67].map((n, i) => (
              <Row key={n} $h={rowHeight(i)}><RowHead>{n}</RowHead>{blanks(11)}</Row>
            ))}
          </tbody>
        </Grid>
      </GridClip>

      <SheetTabs>
        <SheetNav><ArrowGlyph dir="l" /><ArrowGlyph dir="r" /></SheetNav>
        <SheetTab $w={129}>Documentation</SheetTab>
        <SheetTab $w={103} $active>Contractors</SheetTab>
        <AddSheet aria-label="New sheet"><Icon w={19} h={19}><circle cx="9.5" cy="9.5" r="8.5" /><path d="M9.5 5v9M5 9.5h9" strokeWidth="2" /></Icon></AddSheet>
        <Spacer />
        <SheetScroll>
          <DotsSlot><Icon w={3} h={14}><path d="M1.5 1v2M1.5 6v2M1.5 11v2" stroke="#aaa" strokeWidth="2" /></Icon></DotsSlot>
          <ArrowButton aria-label="Scroll left"><ArrowGlyph dir="l" /></ArrowButton>
          <SheetTrack />
        </SheetScroll>
      </SheetTabs>

      <Slicers>
        {SLICERS.map(s => (
          <Slicer key={s.title}>
            <SlicerHead>{s.title}<SlicerIcons><Checks /><ClearFilter /></SlicerIcons></SlicerHead>
            <SlicerList>
              {s.items.map((t, i) => <SlicerButton key={t} $on={s.on.includes(i)} aria-pressed={s.on.includes(i)}>{t}</SlicerButton>)}
            </SlicerList>
          </Slicer>
        ))}
      </Slicers>
    </Sheet>
  );
}

function TaskIcons() {
  return (
    <>
      <TaskButton aria-label="Cortana"><Icon w={18} h={18}><circle cx="9" cy="9" r="6.800" stroke="#000" strokeWidth="2" /></Icon></TaskButton>
      <TaskButton aria-label="Task view">
        <Icon w={18} h={17}><path d="M1 .5v2.5h11V.5M1 16.5V14h11v2.5M1 5.5h11v6H1zM15.5 0v3M15.5 8.5V17" stroke="#000" strokeWidth="1.2" /><path d="M14 4h3v3h-3z" fill="#000" stroke="none" /></Icon>
      </TaskButton>
      <TaskButton aria-label="WhatsApp">
        <Icon w={24} h={24}>
          <rect width="24" height="24" fill="#0078d7" stroke="none" />
          <path d="M5 19l1-3.5a6.7 6.7 0 1 1 2.5 2.5z" fill="#3fc351" stroke="#fff" strokeWidth="1.2" />
          <path d="M9 9q0 2.5 2 4t4 1.8l1-1.5-2-1-1 .8q-1.500-.5-2-2l.8-1-.8-2H9.7z" fill="#fff" stroke="none" />
        </Icon>
      </TaskButton>
      <TaskButton aria-label="Edge">
        <Svg width={24} height={24} viewBox="0 0 24 24">
          <defs>
            <linearGradient id="eg" x1="0" y1="0" x2="1" y2="0"><stop offset="0" stopColor="#1a9fe0" /><stop offset=".6" stopColor="#35c1d0" /><stop offset="1" stopColor="#5fe05a" /></linearGradient>
          </defs>
          <g stroke="none">
            <circle cx="12" cy="12" r="12" fill="#0f6cc0" />
            <path d="M0 12C0 4 6 0 12 0c8 0 12 6 12 10 0 4-3 6-6 6-3 0-4-1-4-2s1-1.5 1-3c0-2-2-4-5-4-5 0-9 3-10 5z" fill="url(#eg)" />
            <path d="M24 15.500c-2 1.500-6 2-8.500 .5-1.500-1-1.500-2-.5-3.500 .5-2-1-3.500-3-3.500-2.500 1-4 3-4 6 0 3 2 5 4.500 5 3 .5 6-.5 8.500-3.500l3.500 1z" fill="#cce1e6" />
            <path d="M8 13c-1 6 2 9 8 10-8 2.5-14-3-13-9 .5-3 4-5 7-5-1 1-2 2-2 4z" fill="#1588d8" />
            <path d="M8 15c0 4 4 6 8 5 2-.5 4-1.500 5-2.500C19 22 15 24 12 24c-3-1-5-5-4-9z" fill="#0f4fa0" />
          </g>
        </Svg>
      </TaskButton>
      <TaskButton aria-label="File Explorer">
        <Icon w={22} h={19}>
          <g stroke="none"><path d="M0 0h9l2 2h10v16H0z" fill="#ffd663" /><path d="M0 0h8l2 3H0z" fill="#d99a14" /><path d="M4 18v-7q0-1 1-1h12q1 0 1 1v7h-4v-4H8v4z" fill="#3c8fd4" /></g>
        </Icon>
      </TaskButton>
      <TaskButton aria-label="Mail">
        <Icon w={24} h={22}>
          <g stroke="none"><path d="M0 7L12 0l12 7v15H0z" fill="#0a5aa8" /><path d="M3 7.5h18l-7 7H9z" fill="#f2f5f7" /><path d="M0 7l12 7.5L24 22H0z" fill="#1d9ae0" /><path d="M24 7v15L0 22l12-8z" fill="#35c1f1" /></g>
        </Icon>
      </TaskButton>
      <TaskButton aria-label="To Do">
        <Icon w={24} h={20}><g stroke="none"><path d="M0 10l4-4 6 6-4 4z" fill="#1a56b8" /><path d="M6 15.5L20.5 .5 24 4.5 9.5 19.500z" fill="#4da3ec" /></g></Icon>
      </TaskButton>
      <TaskButton aria-label="Secure browser">
        <Icon w={24} h={24}>
          <circle cx="12" cy="12" r="10" fill="#fff" stroke="none" />
          <path d="M3 12a9 9 0 0 1 3-6.5" stroke="#f77f2f" strokeWidth="4" /><path d="M5 5.5a9.5 9.5 0 0 1 16.5 6" stroke="#8a4be8" strokeWidth="4" />
          <path d="M21.5 11A9.5 9.500 0 0 1 10 21.5" stroke="#f5c22e" strokeWidth="4" /><path d="M12 21.5A9.5 9.5 0 0 1 2.5 10" stroke="#f58220" strokeWidth="4" />
          <circle cx="12" cy="11" r="2" fill="#444" stroke="none" /><path d="M12 11v4.5" stroke="#444" strokeWidth="1.6" />
        </Icon>
      </TaskButton>
      <TaskButton $state="stack" aria-label="Chrome">
        <Icon w={22} h={22}>
          <g stroke="none">
            <path d="M11 11L1.5 5.5a11 11 0 0 1 19 0z" fill="#e04a3f" /><path d="M11 11V5.5h9.5A11 11 0 0 1 11 22z" fill="#fcc934" /><path d="M11 11l4.8 2.800L11 22A11 11 0 0 1 1.5 5.5z" fill="#2f9e4f" />
            <circle cx="11" cy="11" r="5.300" fill="#fff" /><circle cx="11" cy="11" r="4.2" fill="#4285f4" />
          </g>
        </Icon>
      </TaskButton>
      <TaskButton aria-label="Zoom">
        <Icon w={23} h={23}><g stroke="none"><rect width="23" height="23" rx="6" fill="#4a8cff" /><rect x="4" y="7.5" width="10.5" height="8" rx="1.5" fill="#fff" /><path d="M15.5 10.5L19 8v7.5L15.5 13z" fill="#fff" /></g></Icon>
      </TaskButton>
      <TaskButton $state="active" aria-label="Word"><OfficeTile letter="W" c={['#41a5ee', '#2b7cd3', '#185abd', '#103f91', '#1a55b0']} /></TaskButton>
      <TaskButton $state="open" aria-label="Excel"><OfficeTile letter="X" c={['#33c481', '#21a366', '#107c41', '#185c37', '#0f703b']} /></TaskButton>
    </>
  );
}

export default function App() {
  return (
    <Shell>
      <GlobalStyle />
      <TitleBar>
        <QuickAccess>
          <AutoSave>AutoSave<Toggle><ToggleInput type="checkbox" />Off</Toggle></AutoSave>
          <TitleButton $w={19} aria-label="Save"><Icon w={16} h={16}><path d="M.6 .6h14.8v14.8H2.5L.6 13.5zM3.5 .6v6h9v-6M4.5 15.4v-5h7v5M6.5 12v3" strokeWidth="1.2" /></Icon></TitleButton>
          <TitleButton $w={38} $dim aria-label="Undo"><Undo /></TitleButton>
          <TitleButton $w={6} $dim aria-label="Undo list"><Chevron /></TitleButton>
          <TitleButton $w={28} aria-label="Redo"><Icon w={17} h={17}><path d="M1.5 1.5h5v5M6 2C2 4 .5 8 2 11.5c2 4 8 5.5 12 1.5 3-3.5 2-8-1.500-10.5" strokeWidth="1.4" /></Icon></TitleButton>
          <TitleButton $w={22} aria-label="Touch mode"><Icon w={13} h={17}><path d="M3 8.5a4 4 0 1 1 5.5-1.500M4.5 11V4.5q1.2-1.500 2.3 0V9l4.5 1.5v3L10 16.5H6L1.5 11.5q1-1.500 3 .5" strokeWidth="1.2" /></Icon></TitleButton>
          <TitleButton $w={15} aria-label="Mode list"><Chevron /></TitleButton>
          <TitleButton $w={31} aria-label="Customize"><MoreBar /></TitleButton>
        </QuickAccess>
        <DocTitle>Instructions_NP_EX19_EOM6-1.docx  -  Word</DocTitle>
        <TopSearch><Search /><BareInput type="search" placeholder="Search (Alt+Q)" aria-label="Search" /></TopSearch>
        <Spacer />
        <UserName>khan ribbal</UserName>
        <Avatar>KR</Avatar>
        <TitleButton $w={34} aria-label="Coming soon"><Icon w={17} h={17}><path d="M1 15.5L3 8l6-5.5 4 4L8 13zM4 8l4.5 5M11 3V0M13 4.5L16 1M13.5 6.5H17" strokeWidth="1.2" /></Icon></TitleButton>
        <TitleButton $w={56} aria-label="Ribbon display"><Icon w={14} h={11}><path d="M.5 .5h13v10H.5zM.5 2.5h13M7 9V4.5M4.8 6.5L7 4.3l2.2 2.2" /></Icon></TitleButton>
        <TitleButton $w={38} aria-label="Minimize"><Icon w={10} h={10}><path d="M0 5.5h10" /></Icon></TitleButton>
        <TitleButton $w={52} aria-label="Restore"><Icon w={10} h={10}><path d="M.5 2.5h7v7h-7zM2.5 2V.5h7v7H8" /></Icon></TitleButton>
        <TitleButton $w={44} aria-label="Close"><Icon w={11} h={11}><path d="M.5 .5l10 10M10.5 .5l-10 10" strokeWidth="1.2" /></Icon></TitleButton>
      </TitleBar>

      <TabRow>
        <Tabs>{TABS.map(t => <Tab key={t} $active={t === 'Home'}>{t}</Tab>)}</Tabs>
        <Spacer />
        <CardButton><Icon w={12} h={12}><path d="M3 4H.5v7.5h9V8M3.5 8.5Q4 4 8 4V1.5L11.5 5 8 8V6Q5 6 3.5 8.5z" /></Icon>Share</CardButton>
        <CardButton><Icon w={12} h={12}><path d="M.5 1.5h11v7H5L3 11V8.5H.5z" /></Icon>Comments</CardButton>
        <Smile aria-label="Feedback"><Icon w={17} h={17}><circle cx="8.5" cy="8.5" r="7.5" strokeWidth="1.2" /><path d="M5.8 5v3M11.2 5v3M4.5 10.5q4 4 8 0" strokeWidth="1.3" /></Icon></Smile>
      </TabRow>

      <RibbonBar />

      <Workspace>
        <Page>
          <PageRule />
          <Spreadsheet />
        </Page>
        <VScroll>
          <ArrowButton aria-label="Scroll up"><ArrowGlyph dir="u" /></ArrowButton>
          <Grow $by={435} />
          <VThumb />
          <Grow $by={136} />
          <ArrowButton aria-label="Scroll down"><ArrowGlyph dir="d" /></ArrowButton>
        </VScroll>
      </Workspace>
      <HScroll>
        <ArrowButton aria-label="Scroll left"><ArrowGlyph dir="l" /></ArrowButton>
        <HTrack><HThumb /></HTrack>
        <ArrowButton aria-label="Scroll right"><ArrowGlyph dir="r" /></ArrowButton>
      </HScroll>

      <StatusBar>
        <StatusItem $w={76}>Page 3 of 3</StatusItem>
        <StatusItem $w={95}>5 of 780 words</StatusItem>
        <StatusItem $w={32}><Icon w={14} h={13}><path d="M6 12H.5V.5H6L7 2l1-1.500h5.5V7M7 2v7M8 10l2 2.5L14 8" stroke="#444" /></Icon></StatusItem>
        <StatusItem $w={134}>English (United States)</StatusItem>
        <StatusItem $w={160}>
          <Icon w={15} h={14}><path d="M6 .8A6 6 0 0 0 3 11" strokeDasharray="2 1" stroke="#444" /><path d="M6.5 2v5M4.5 5l2 2 2-2M9 4.5h5M11.5 2v5M8 8l6 6M14 8l-6 6" stroke="#444" /></Icon>
          Accessibility: Investigate
        </StatusItem>
        <Spacer />
        <StatusItem $w={58}>
          <Icon w={14} h={14}><path d="M.5 4V.5H3M11 .5h2.5V4M.5 10v3.5H3M11 13.5h2.5V10M4 2.5h4L10.5 5v6.5H4zM7.5 2.5V5.5h3" stroke="#444" /></Icon>
          Focus
        </StatusItem>
        <ViewButton aria-label="Read mode"><Icon w={13} h={13}><path d="M6.5 2L5.5 .5h-5v11h5l1 1 1-1h5V.5h-5zV12M2 3.5h3M2 5.5h3M2 7.5h3M8 3.5h3M8 5.5h3M8 7.5h3M2 9.5h3M8 9.5h3" stroke="#444" /></Icon></ViewButton>
        <ViewButton $on aria-label="Print layout"><Icon w={11} h={14}><path d="M.5 .5h10v13H.5zM2 3.5h7M2 5.5h7M2 7.5h7M2 9.5h7M2 11.5h7" stroke="#333" /></Icon></ViewButton>
        <ViewButton aria-label="Web layout"><Icon w={14} h={14}><path d="M5 11.5H.5V.5h11V4M2 3.5h8M2 5.5h4M2 7.5h3M2 9.5h3" stroke="#444" /><circle cx="9.5" cy="9.5" r="4" stroke="#444" /><path d="M9.5 5.5v8M5.5 9.5h8M7 7h5M7 12h5" stroke="#444" /></Icon></ViewButton>
        <ZoomGroup>
          <ZoomButton aria-label="Zoom out"><Icon w={8} h={8}><path d="M0 4.5h8" /></Icon></ZoomButton>
          <ZoomRange type="range" min={0} max={100} defaultValue={66} aria-label="Zoom" />
          <ZoomButton aria-label="Zoom in"><Icon w={8} h={8}><path d="M0 4.5h8M4.5 0v8" /></Icon></ZoomButton>
          <ZoomValue>230%</ZoomValue>
        </ZoomGroup>
      </StatusBar>

      <TaskBar>
        <StartButton aria-label="Start"><Icon w={16} h={16}><path d="M0 2.2l6.5-.9v6.2H0zM7.3 1.2L16 0v7.5H7.3zM0 8.4h6.5v6.3L0 13.8zM7.3 8.4H16V16l-8.7-1.2z" fill="#000" stroke="none" /></Icon></StartButton>
        <TaskSearch><Search s={17} /><BareInput type="search" placeholder="Type here to search" aria-label="Search Windows" /></TaskSearch>
        <TaskIcons />
        <Spacer />
        <Weather $w={120}>
          <Icon w={22} h={18}><g stroke="none"><circle cx="7" cy="7" r="6" fill="#f5b42a" /><path d="M5 16a4.5 4.5 0 0 1 0-8 6 6 0 0 1 10-1 5 5 0 0 1 2 9z" fill="#cfe6fa" /><path d="M8 16l7-8q5 1 5 4t-4 4z" fill="#9fcdf3" /></g></Icon>
          89°F  AQI 58
        </Weather>
        <TrayItem $w={38} aria-label="Hidden icons"><Icon w={12} h={8}><path d="M.7 6.7 6 1.3l5.3 5.4" stroke="#111" strokeWidth="1.3" /></Icon></TrayItem>
        <TrayItem $w={28} aria-label="Battery"><Icon w={17} h={13}><path d="M6 3.5h9v8H6v-3M15.5 6v3M0 2.5h5v3l-1.500 1.500h-1.500L.5 5.5v-3M1.5 0v2.5M4 0v2.5M2.7 7v4.5H5" stroke="#111" strokeWidth="1.2" /><path d="M8 5h3v5H8z" fill="#111" stroke="none" /></Icon></TrayItem>
        <TrayItem $w={36} aria-label="Network"><Icon w={14} h={13}><path d="M1 11.5A12 12 0 0 1 12.5 1M3.5 12A9 9 0 0 1 12.5 4M6.5 12a6 6 0 0 1 6-5M9 12.5a3 3 0 0 1 3.5-3" stroke="#333" strokeWidth="1.2" /><circle cx="11.5" cy="11.5" r="1.5" fill="#111" stroke="none" /></Icon></TrayItem>
        <TrayItem $w={24} aria-label="Volume muted"><Icon w={15} h={12}><path d="M.5 3.5h2.5L6.5 .8v10.4L3 8.5H.5zM9.5 3.5l5 5M14.5 3.5l-5 5" stroke="#111" strokeWidth="1.2" /></Icon></TrayItem>
        <Language $w={44}>ENG</Language>
        <Clock>12:42 PM<br />9/6/2021</Clock>
        <Notice aria-label="Notifications"><Icon w={16} h={16}><path d="M0 1h16v11H7l-4 3.5V12H0z" fill="#000" stroke="none" /><path d="M2.5 4.5h11M2.5 7.5h11M2.5 9.5h7" stroke="#cce1e6" /></Icon><Badge>2</Badge></Notice>
      </TaskBar>
    </Shell>
  );
}
